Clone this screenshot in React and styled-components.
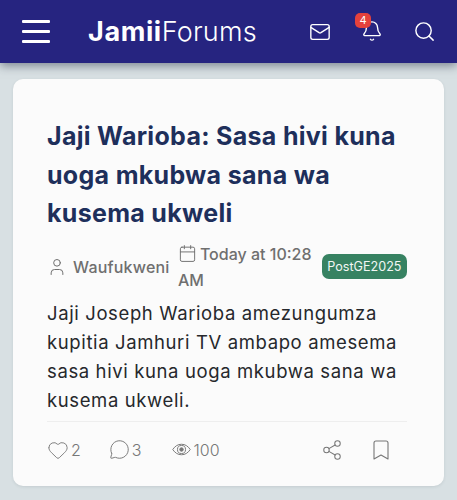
import React from 'react';
import styled, { createGlobalStyle } from 'styled-components';
import { Mail, Bell, Search, User, Calendar, Heart, MessageCircle, Share2, Bookmark } from 'lucide-react';

const GlobalStyle = createGlobalStyle`
  html, body {
    margin: 0;
    padding: 0;
    background: #d8e0e3;
    font-family: Inter, 'Liberation Sans', sans-serif;
  }
  * { box-sizing: border-box; }
`;

const Page = styled.div`
  width: 457px;
  height: 500px;
  overflow: hidden;
`;

const Header = styled.header`
  height: 63px;
  background: #262480;
  box-shadow: 0 3px 9px rgba(40, 50, 70, 0.5);
  display: flex;
  align-items: center;
  padding: 0 21px 0 22px;
  color: #fff;
`;

const Burger = styled.div`
  width: 28px;
  display: flex;
  flex-direction: column;
  gap: 7px;
  margin-right: 38px;
  span {
    height: 3px;
    background: #fff;
    border-radius: 1px;
  }
`;

const Logo = styled.div`
  flex: 1;
  font-size: 27px;
  font-weight: 300;
  letter-spacing: 0.2px;
  b { font-weight: 700; letter-spacing: 0.6px; }
`;

const HeaderIcons = styled.div`
  display: flex;
  align-items: center;
  gap: 30px;
`;

const BellWrap = styled.div`
  position: relative;
  height: 24px;
`;

const Badge = styled.span`
  position: absolute;
  left: -6px;
  top: -7px;
  width: 16px;
  height: 15px;
  border-radius: 5px;
  background: #e5413c;
  font-size: 11px;
  display: flex;
  align-items: center;
  justify-content: center;
`;

const Card = styled.article`
  margin: 16px 13px 0;
  height: 407px;
  background: #fbfbfb;
  border-radius: 10px;
  padding: 38px 37px 0 34px;
  box-shadow: 0 1px 3px rgba(60, 70, 80, 0.12);
`;

const Title = styled.h1`
  margin: 0;
  font-size: 25px;
  line-height: 38.5px;
  font-weight: 650;
  letter-spacing: 0.3px;
  color: #1e2f5b;
`;

const Meta = styled.div`
  display: flex;
  align-items: center;
  margin-top: 8px;
  color: #6f6f6f;
  font-size: 16px;
  font-weight: 500;
`;

const Author = styled.div`
  display: flex;
  align-items: center;
  gap: 6px;
  width: 131px;
  letter-spacing: 0.2px;
`;

const DateText = styled.div`
  width: 144px;
  line-height: 26px;
  svg { vertical-align: -3px; margin-right: 3px; }
`;

const Tag = styled.span`
  background: #378262;
  color: #f2f7f4;
  font-size: 12.6px;
  font-weight: 400;
  padding: 4px 5.5px;
  border-radius: 7px;
  line-height: 17px;
`;

const Body = styled.p`
  margin: 6px 0 0;
  font-size: 18.5px;
  line-height: 29px;
  letter-spacing: 0.62px;
  color: #26282c;
`;

const Footer = styled.div`
  margin-top: 6px;
  border-top: 1px solid #eeeeee;
  display: flex;
  align-items: center;
  padding: 16px 0 0;
  color: #777;
  font-size: 16px;
  font-weight: 300;
`;

const Stat = styled.div`
  display: flex;
  align-items: center;
  gap: 2px;
  margin-right: ${(p) => p.$gap}px;
`;

const Actions = styled.div`
  margin-left: auto;
  display: flex;
  align-items: center;
  gap: 26px;
  padding-right: 14px;
`;

const EyeIcon = () => (
  <svg width="21" height="21" viewBox="0 0 24 24" fill="none" stroke="currentColor" strokeWidth="1.1">
    <path d="M2 12c2.6-4 6-6 10-6s7.4 2 10 6c-2.6 4-6 6-10 6s-7.4-2-10-6z" />
    <circle cx="12" cy="12" r="4.6" />
    <circle cx="12" cy="12" r="2" fill="currentColor" />
  </svg>
);

const App = () => (
  <Page>
    <GlobalStyle />
    <Header>
      <Burger><span /><span /><span /></Burger>
      <Logo><b>Jamii</b>Forums</Logo>
      <HeaderIcons>
        <Mail size={22} strokeWidth={1.5} />
        <BellWrap>
          <Bell size={22} strokeWidth={1.5} />
          <Badge>4</Badge>
        </BellWrap>
        <Search size={23} strokeWidth={1.5} />
      </HeaderIcons>
    </Header>
    <Card>
      <Title>Jaji Warioba: Sasa hivi kuna uoga mkubwa sana wa kusema ukweli</Title>
      <Meta>
        <Author><User size={20} strokeWidth={1.2} />Waufukweni</Author>
        <DateText><Calendar size={19} strokeWidth={1.2} />Today at 10:28 AM</DateText>
        <Tag>PostGE2025</Tag>
      </Meta>
      <Body>Jaji Joseph Warioba amezungumza kupitia Jamhuri TV ambapo amesema sasa hivi kuna uoga mkubwa sana wa kusema ukweli.</Body>
      <Footer>
        <Stat $gap={28}><Heart size={22} strokeWidth={1} />2</Stat>
        <Stat $gap={29}><MessageCircle size={21} strokeWidth={1.1} />3</Stat>
        <Stat $gap={0}><EyeIcon />100</Stat>
        <Actions>
          <Share2 size={22} strokeWidth={1.1} />
          <Bookmark size={24} strokeWidth={1.1} />
        </Actions>
      </Footer>
    </Card>
  </Page>
);

export default App;
